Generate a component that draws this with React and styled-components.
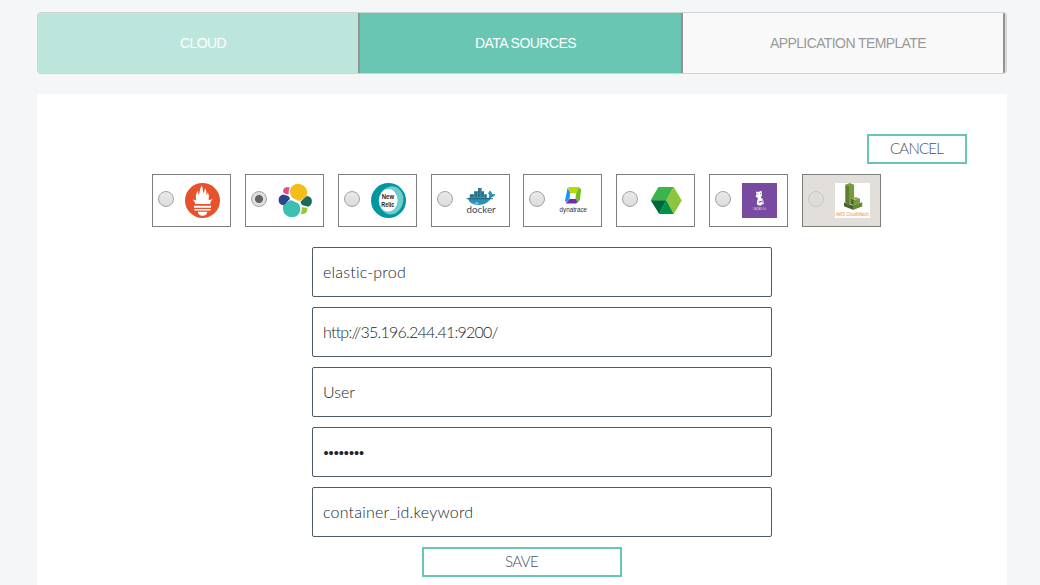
import React from 'react';
import styled, { createGlobalStyle } from 'styled-components';

const GlobalStyle = createGlobalStyle`
  * { box-sizing: border-box; }
  body { margin: 0; background: #f4f6f8; overflow: hidden; }
`;

const Page = styled.main`
  width: 1040px;
  height: 585px;
  padding: 12px 33px 0 37px;
  display: flex;
  flex-direction: column;
  gap: 20px;
  overflow: hidden;
  font-family: Lato, sans-serif;
`;

const Tabs = styled.nav`
  display: flex;
  flex: none;
  height: 62px;
  border: 1px solid #d0d3d2;
  border-radius: 4px;
  overflow: hidden;
  background: #cfe3dd;
`;

const Tab = styled.button`
  width: ${(p) => p.$width}px;
  flex: none;
  padding: 0 0 0 10px;
  border: 0;
  border-right: 2px solid #959293;
  font: 14px 'Liberation Sans', Arial, sans-serif;
  letter-spacing: ${(p) => p.$spacing || 0}px;
  color: ${(p) => p.$color};
  background: ${(p) => p.$background};
`;

const Panel = styled.section`
  flex: 1;
  background: #fff;
  padding-top: 40px;
  display: flex;
  flex-direction: column;
`;

const ActionButton = styled.button`
  width: ${(p) => p.$width}px;
  height: 30px;
  flex: none;
  padding: 0 1px 2px 0;
  border: 2px solid #68c6b3;
  background: #fff;
  color: #47535f;
  font: 300 15px/24px Lato, sans-serif;
  letter-spacing: ${(p) => p.$spacing}px;
`;

const Toolbar = styled.div`
  display: flex;
  justify-content: flex-end;
  padding-right: 40px;
`;

const Sources = styled.div`
  display: flex;
  gap: 13.857px;
  margin: 10px 0 20px 115px;
`;

const Source = styled.label`
  width: 79px;
  height: 53px;
  flex: none;
  display: flex;
  align-items: center;
  gap: 11px;
  padding-left: 5px;
  border: 1px solid #7e7e7a;
  background: ${(p) => (p.$disabled ? '#e2dfda' : '#fff')};
`;

const Radio = styled.input`
  appearance: none;
  width: 16px;
  height: 16px;
  margin: -3px 0 0;
  flex: none;
  border: 1px solid #a2a2a2;
  border-radius: 50%;
  background: linear-gradient(#e9e9e9, #dcdcdc);
  &:checked {
    background: radial-gradient(circle, #636363 0 3.6px, #dfdfdf 4.4px);
  }
  &:disabled {
    border-color: #c9c7c4;
    background: #dfddd9;
  }
`;

const Logo = styled.svg`
  width: 35px;
  height: 35px;
  flex: none;
  display: block;
`;

const Form = styled.form`
  width: 460px;
  margin-left: 275px;
  display: flex;
  flex-direction: column;
  gap: 10px;
`;

const Field = styled.div`
  height: 50px;
  flex: none;
  padding: 0 10px;
  border: 1px solid #4b5a66;
  border-radius: 2px;
  font: 300 16px/48px Lato, sans-serif;
  letter-spacing: ${(p) => p.$spacing || 0}px;
  color: #20262c;
`;

const Password = styled(Field)`
  padding: 1px 10px 0 10.5px;
  font: 14.5px/48px 'Liberation Sans', Arial, sans-serif;
`;

const SaveRow = styled.div`
  display: flex;
  padding-left: 110px;
`;

const Prometheus = () => (
  <Logo viewBox="0 0 35 35">
    <circle cx="17.5" cy="17.5" r="17.5" fill="#e6522c" />
    <path fill="#fff" d="M10.2 21 9.7 19 7.5 16.2Q9 17.4 11.4 17.3C10 13 11.5 11.3 12.2 7.7Q13.6 10 13.6 12.2C15 9 14.7 5.5 16.8 2.4Q17.8 4.3 17.7 7L18.8 10.8 20 5Q22 8 21.5 12.5L22.9 9.2Q24.8 13.5 23.7 17.3 25.9 17 27.6 15.7L25.6 19 25.2 21ZM9 22.7H26V24.7H9ZM9.4 25.9H25.6V27.6H9.4ZM12.8 28.8H22.3C22 31.5 20.1 32.8 17.5 32.8S13 31.5 12.8 28.8Z" />
  </Logo>
);

const Elastic = () => (
  <Logo viewBox="0 0 35 35">
    <path fill="#f4bd19" d="M12.1 7C13.2 2.5 16.7.7 20.7.9C26 1.2 29.4 5.3 29.2 10Q29 13.5 26.2 15.5L21.2 18.1 14.1 14.7Q11.4 11 12.1 7Z" />
    <path fill="#3cbeb1" d="M6.2 20.2 13 17.1 20.4 20.4Q22.9 23.5 22.1 27.7C20.9 32.3 17.7 34.2 14 34.1C8.6 34 4.9 30 5 25.2Q5 22.5 6.2 20.2Z" />
    <path fill="#e9478b" d="M5.1 8.8Q5 5.1 8.1 4.2L11.7 4.2Q10.5 7.3 10.6 11.2Q6.2 11.5 5.1 8.8Z" />
    <path fill="#2c458f" d="M.6 17Q.6 12.7 5.1 11.5L10.4 12.9 12.1 15.8 5.8 22.2Q.6 21.8.6 17Z" />
    <path fill="#1b6b58" d="M22.4 18.8 28.8 12.9Q33.7 13.4 33.9 18Q34 22 30.2 23.8L23.9 22.1Z" />
    <path fill="#93c83e" d="M24 24.1 29.3 25Q29.8 30.7 25.1 31L22.9 30.9Q24 27.6 24 24.1Z" />
  </Logo>
);

const NewRelic = () => (
  <Logo viewBox="0 0 35 35">
    <circle cx="17.5" cy="17.5" r="17.5" fill="#0097a0" />
    <ellipse cx="20.2" cy="17.3" rx="12" ry="14.2" fill="#70cccf" transform="rotate(12 20.2 17.3)" />
    <ellipse cx="17.2" cy="17.3" rx="9.4" ry="11.2" fill="#fff" />
    <g fill="#222" fontFamily="Liberation Sans, sans-serif" fontSize="7.6" fontWeight="700">
      <text x="10.8" y="15.7" textLength="12.2" lengthAdjust="spacingAndGlyphs">New</text>
      <text x="10.3" y="23.6" textLength="12.9" lengthAdjust="spacingAndGlyphs">Relic</text>
    </g>
  </Logo>
);

const Docker = () => (
  <Logo viewBox="0 0 35 35">
    <path fill="#2a91b8" d="M4 14.7H25.2Q25.6 12.2 24.2 10.1L26 7.6Q28 9.3 28.2 11.1L31.5 11.3Q30.5 14.2 27.5 14.4C25 19 20.5 21.9 14.7 21.9C8 21.9 4.5 19 4 14.7Z" />
    <path fill="#27718a" d="M7.3 11.2H10V8.2H14.1V5H17.6V8.2H20V11.2H22.8V14.8H5.8V11.2Z" />
    <path stroke="#5ba9bd" strokeWidth=".6" d="M10.3 8.5V14.5M13.7 8.5V14.5M17 5.5V14.5M20.1 11V14.5" />
    <path stroke="#245061" strokeWidth=".8" d="M2.5 15.7H29" />
    <path fill="#73c4dc" d="M10 20.2Q13 18 15.4 20.4L13 21.3Z" />
    <text x="2.6" y="29.7" textLength="29" lengthAdjust="spacingAndGlyphs" fill="#364a54" fontFamily="Lato, sans-serif" fontSize="9.8">docker</text>
  </Logo>
);

const Dynatrace = () => (
  <Logo viewBox="0 0 35 35">
    <path fill="#b4dc00" d="M12 4H22.7L20.2 10.2H14Z" />
    <path fill="#73be28" d="M22.7 4 25.2 6.4 23.9 17 21.5 20 19.4 16.2 20.2 10.2Z" />
    <path fill="#1496ff" d="M11.6 4.8 14.2 10 13.4 16 9.9 19.6 9.1 17.2Z" />
    <path fill="#6f2da8" d="M9.9 20.2 13.5 16H19.6L21.4 18.8 20.3 20.6H11Z" />
    <text x="3.5" y="29" textLength="27.6" lengthAdjust="spacingAndGlyphs" fill="#333" fontFamily="Liberation Sans, sans-serif" fontSize="7.3">dynatrace</text>
  </Logo>
);

const Hexagon = () => (
  <Logo viewBox="0 0 35 35">
    <path fill="#3bb54a" d="M9.4 4H24.7L17.5 17.3H1.7Z" />
    <path fill="#8cc63f" d="M24.7 4 32.8 17.4 24.7 31 17.2 17.3Z" />
    <path fill="#006837" d="M1.7 17.3H17.4L10.2 31Z" />
    <path fill="#009245" d="M17.3 17.3 24.7 31H10.1Z" />
  </Logo>
);

const Datadog = () => (
  <Logo viewBox="0 0 35 35">
    <path fill="#774b9f" d="M0 0H35V35H0Z" />
    <path fill="#fff" d="M14 8.4 16 9.1 19.6 7.8 19.9 12.4 18.8 15.1 20.2 16.4 20.8 20.8 18.3 22.8 14.8 21.4 15.2 18 16.1 15.6 13.6 13.3 14.5 11.4Z" />
    <path fill="none" stroke="#fff" strokeWidth=".65" d="M16 16.2 20.4 15.6 21.6 20.8 16.2 21.9Z" />
    <path fill="#774b9f" d="M15.5 10.7H16.5V11.6H15.5ZM18.1 10.2H19V11.1H18.1ZM16.8 18.4 19.5 17.7 19.8 19 17 19.8Z" />
    <text x="11.2" y="26.6" textLength="12.8" lengthAdjust="spacingAndGlyphs" fill="#e4d9ec" fontFamily="Liberation Sans, sans-serif" fontSize="4">DATADOG</text>
  </Logo>
);

const CloudWatch = () => (
  <Logo viewBox="0 0 35 35">
    <path fill="#fff" d="M0 0H35V35H0Z" />
    <path fill="#4b612c" d="M9 19.6 18 22.5 27.1 19.6V23.2L18 26.7 9 23.2Z" />
    <path fill="#648b34" d="M18 22.5 27.1 19.6V23.2L18 26.7Z" />
    <path fill="#5b7d31" d="M10.3 1.7 14 2.7V21.2L10.3 20Z" />
    <path fill="#759c3e" d="M10.3 1.7 14.7 0 19.1 1.7V21L14 21.2V2.7Z" />
    <path fill="#4b612c" d="M16.2 15.8 18.7 16.7V22.2L16.2 21.3Z" />
    <path fill="#759c3e" d="M18.7 16.7 25 15.5V20.3L18.7 22.2Z" />
    <path fill="#92b35c" d="M16.2 15.8 21 14.1 25 15.5 18.7 16.7Z" />
    <text x=".7" y="33.3" textLength="33.2" lengthAdjust="spacingAndGlyphs" fill="#f28e38" fontFamily="Liberation Sans, sans-serif" fontSize="5.2">AWS CloudWatch</text>
  </Logo>
);

const sources = [
  ['prometheus', Prometheus],
  ['elastic', Elastic],
  ['newrelic', NewRelic],
  ['docker', Docker],
  ['dynatrace', Dynatrace],
  ['hexagon', Hexagon],
  ['datadog', Datadog],
  ['cloudwatch', CloudWatch],
];

export default function App() {
  return (
    <>
      <GlobalStyle />
      <Page>
        <Tabs>
          <Tab $width={322} $spacing={-0.65} $color="#fff" $background="#bce6db">CLOUD</Tab>
          <Tab $width={323} $spacing={-0.55} $color="#fff" $background="#68c6b3">DATA SOURCES</Tab>
          <Tab $width={322} $spacing={-0.6} $color="#999" $background="#f9f9f9">APPLICATION TEMPLATE</Tab>
        </Tabs>
        <Panel>
          <Toolbar>
            <ActionButton $width={100} $spacing={-0.8}>CANCEL</ActionButton>
          </Toolbar>
          <Sources>
            {sources.map(([name, Icon]) => (
              <Source key={name} $disabled={name === 'cloudwatch'}>
                <Radio
                  type="radio"
                  name="source"
                  defaultChecked={name === 'elastic'}
                  disabled={name === 'cloudwatch'}
                />
                <Icon />
              </Source>
            ))}
          </Sources>
          <Form>
            <Field $spacing={0.2}>elastic-prod</Field>
            <Field $spacing={-0.77}>http://35.196.244.41:9200/</Field>
            <Field $spacing={0}>User</Field>
            <Password>••••••••</Password>
            <Field $spacing={0.2}>container_id.keyword</Field>
            <SaveRow>
              <ActionButton type="button" $width={200} $spacing={-0.6}>SAVE</ActionButton>
            </SaveRow>
          </Form>
        </Panel>
      </Page>
    </>
  );
}
